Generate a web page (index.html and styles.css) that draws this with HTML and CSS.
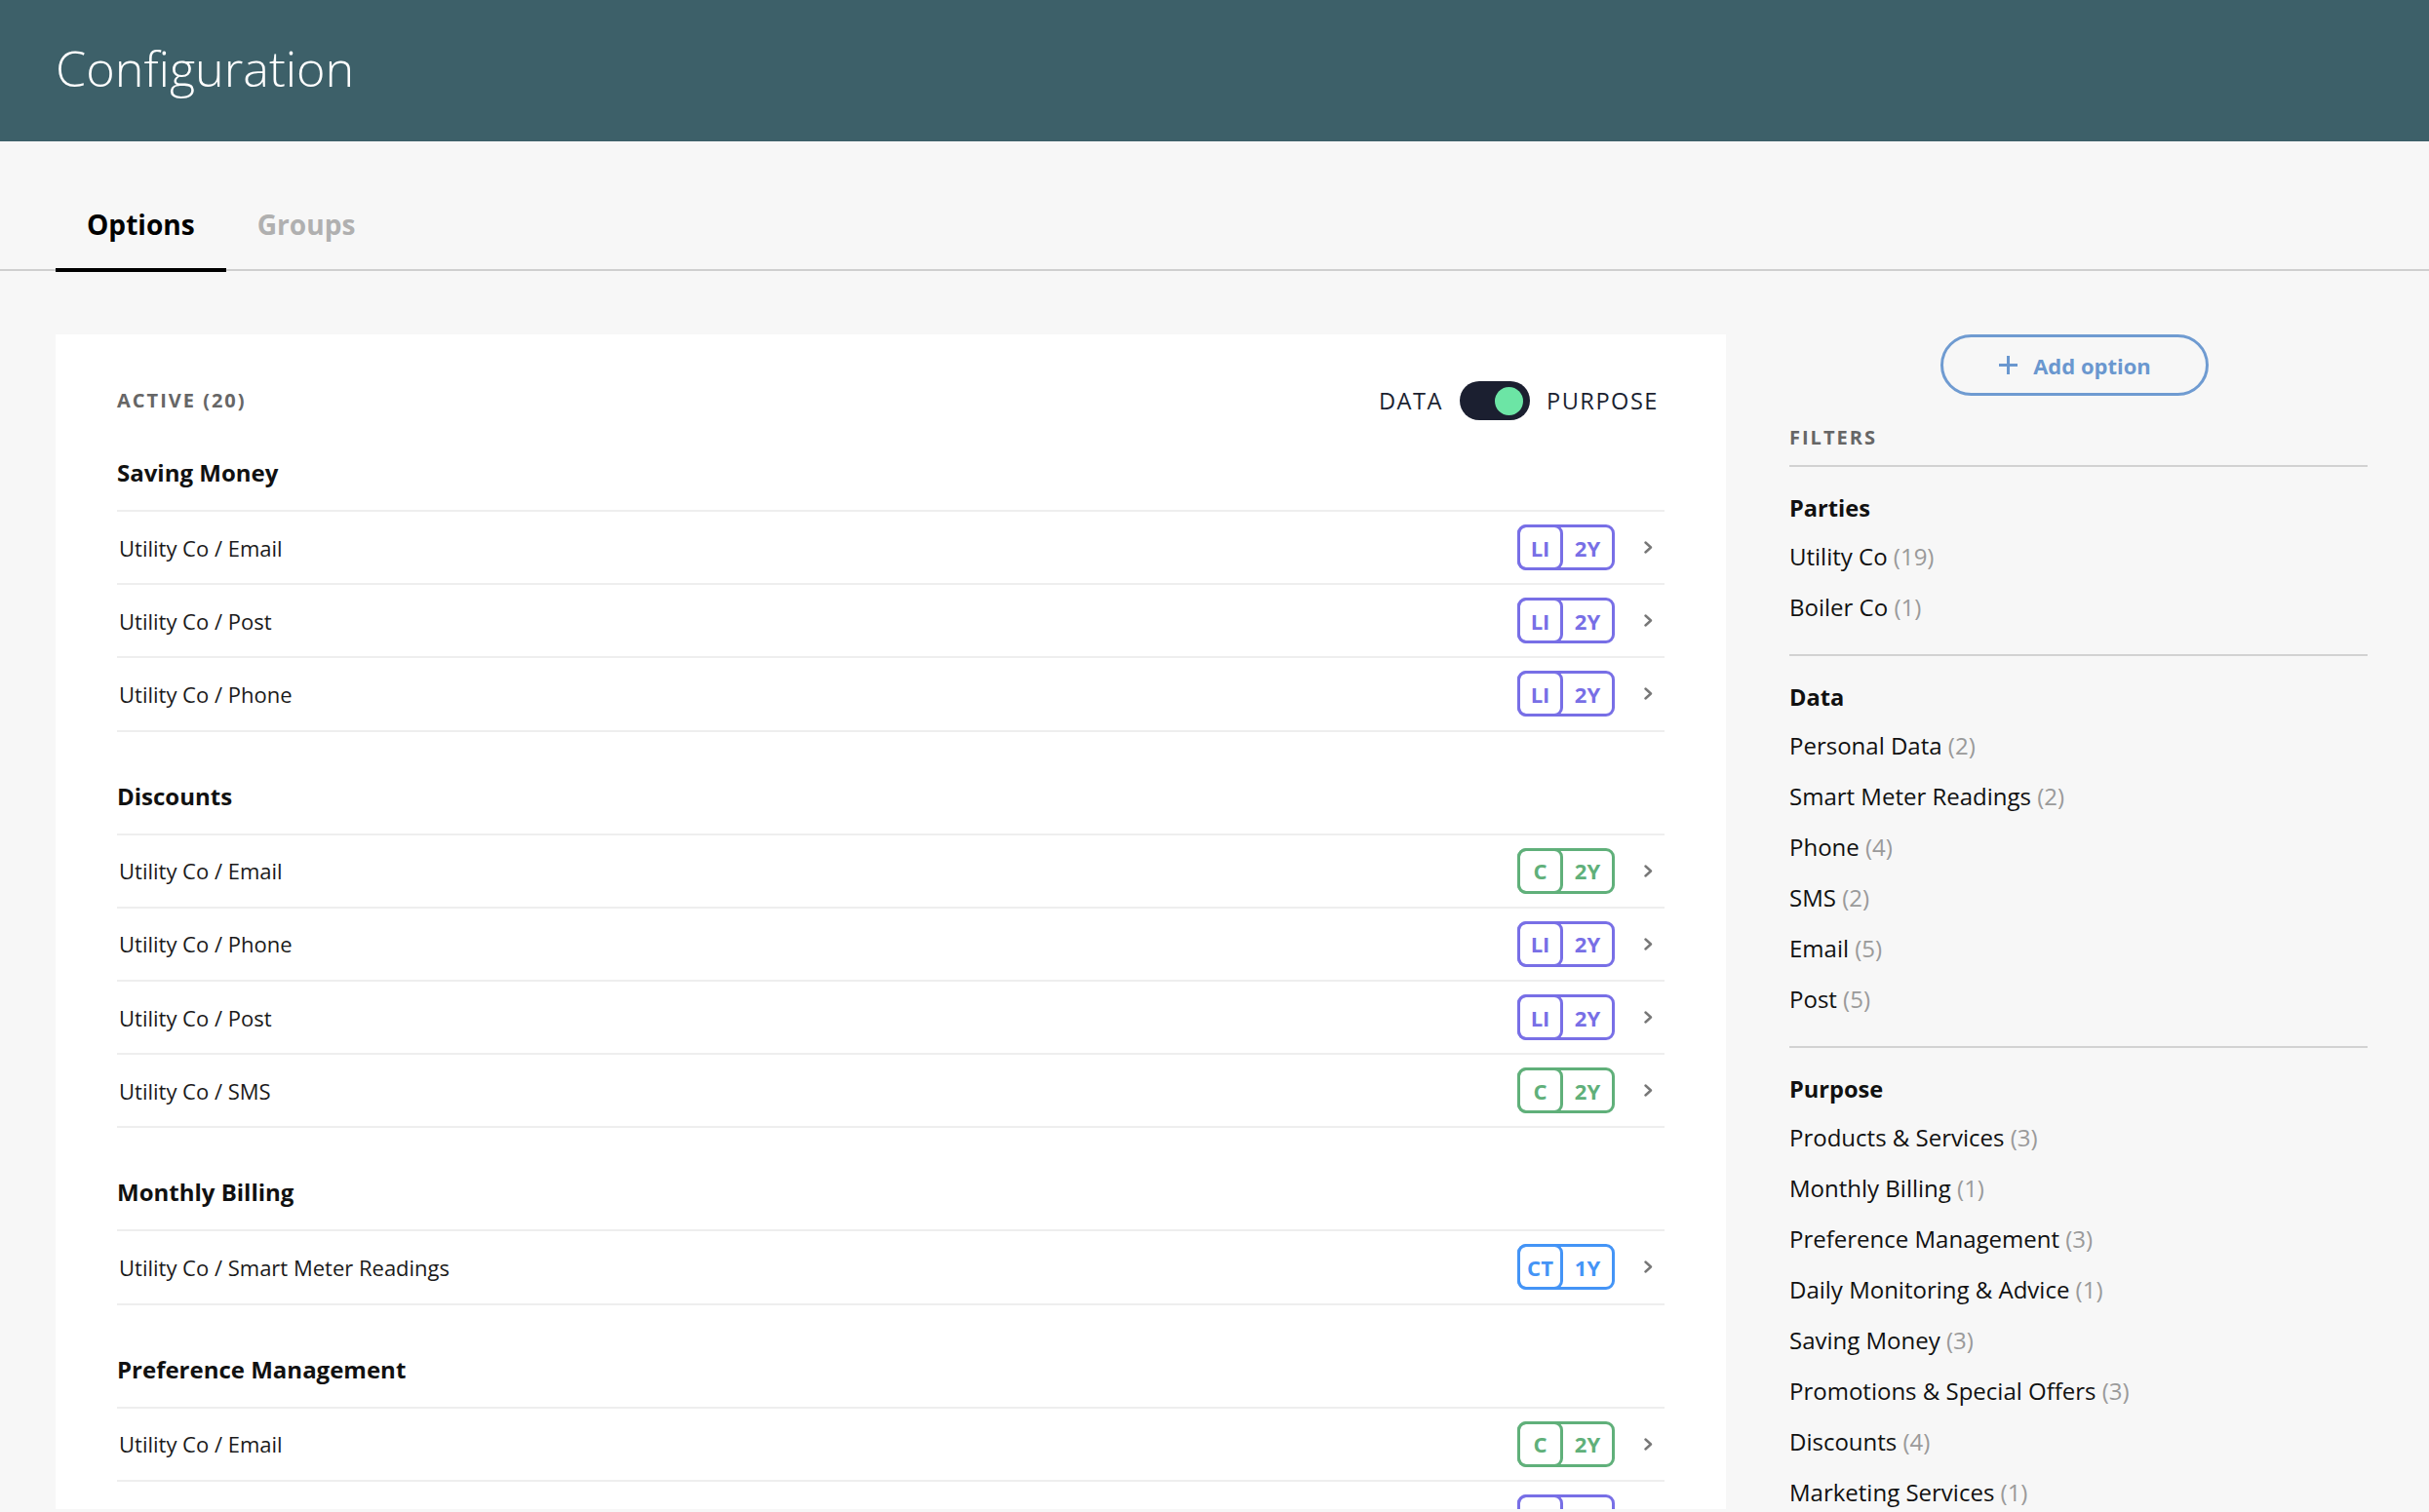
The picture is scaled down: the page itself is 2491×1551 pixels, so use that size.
FILE: index.html
```html
<!DOCTYPE html>
<html lang="en">
<head>
<meta charset="utf-8">
<title>Configuration</title>
<link rel="stylesheet" href="styles.css">
</head>
<body>
<header class="topbar">
  <h1 class="title">Configuration</h1>
</header>
<nav class="tabs">
  <a class="tab tab-active">Options</a>
  <a class="tab">Groups</a>
</nav>
<main class="layout">
  <section class="card">
    <div class="card-head">
      <span class="label">ACTIVE (20)</span>
      <div class="switch-wrap">
        <span class="switch-label">DATA</span>
        <span class="switch"><span class="knob"></span></span>
        <span class="switch-label">PURPOSE</span>
      </div>
    </div>

    <div class="group group-first">
      <h3 class="group-title">Saving Money</h3>
      <div class="row"><span class="row-name">Utility Co / Email</span><span class="badge badge-purple"><span class="badge-k">LI</span><span class="badge-v">2Y</span></span><svg class="chev" viewBox="0 0 9 13"><path d="M1.5 1.5L7 6.5L1.5 11.5"/></svg></div>
      <div class="row"><span class="row-name">Utility Co / Post</span><span class="badge badge-purple"><span class="badge-k">LI</span><span class="badge-v">2Y</span></span><svg class="chev" viewBox="0 0 9 13"><path d="M1.5 1.5L7 6.5L1.5 11.5"/></svg></div>
      <div class="row"><span class="row-name">Utility Co / Phone</span><span class="badge badge-purple"><span class="badge-k">LI</span><span class="badge-v">2Y</span></span><svg class="chev" viewBox="0 0 9 13"><path d="M1.5 1.5L7 6.5L1.5 11.5"/></svg></div>
    </div>

    <div class="group">
      <h3 class="group-title">Discounts</h3>
      <div class="row"><span class="row-name">Utility Co / Email</span><span class="badge badge-green"><span class="badge-k">C</span><span class="badge-v">2Y</span></span><svg class="chev" viewBox="0 0 9 13"><path d="M1.5 1.5L7 6.5L1.5 11.5"/></svg></div>
      <div class="row"><span class="row-name">Utility Co / Phone</span><span class="badge badge-purple"><span class="badge-k">LI</span><span class="badge-v">2Y</span></span><svg class="chev" viewBox="0 0 9 13"><path d="M1.5 1.5L7 6.5L1.5 11.5"/></svg></div>
      <div class="row"><span class="row-name">Utility Co / Post</span><span class="badge badge-purple"><span class="badge-k">LI</span><span class="badge-v">2Y</span></span><svg class="chev" viewBox="0 0 9 13"><path d="M1.5 1.5L7 6.5L1.5 11.5"/></svg></div>
      <div class="row"><span class="row-name">Utility Co / SMS</span><span class="badge badge-green"><span class="badge-k">C</span><span class="badge-v">2Y</span></span><svg class="chev" viewBox="0 0 9 13"><path d="M1.5 1.5L7 6.5L1.5 11.5"/></svg></div>
    </div>

    <div class="group">
      <h3 class="group-title">Monthly Billing</h3>
      <div class="row"><span class="row-name">Utility Co / Smart Meter Readings</span><span class="badge badge-blue"><span class="badge-k">CT</span><span class="badge-v">1Y</span></span><svg class="chev" viewBox="0 0 9 13"><path d="M1.5 1.5L7 6.5L1.5 11.5"/></svg></div>
    </div>

    <div class="group">
      <h3 class="group-title">Preference Management</h3>
      <div class="row"><span class="row-name">Utility Co / Email</span><span class="badge badge-green"><span class="badge-k">C</span><span class="badge-v">2Y</span></span><svg class="chev" viewBox="0 0 9 13"><path d="M1.5 1.5L7 6.5L1.5 11.5"/></svg></div>
      <div class="row"><span class="row-name"></span><span class="badge badge-purple"><span class="badge-k"></span><span class="badge-v"></span></span><svg class="chev" viewBox="0 0 9 13"><path d="M1.5 1.5L7 6.5L1.5 11.5"/></svg></div>
    </div>
  </section>

  <aside class="sidebar">
    <button class="add-btn" type="button"><svg class="plus" viewBox="0 0 21 21"><path d="M10.5 1v19M1 10.5h19"/></svg><span>Add option</span></button>
    <div class="filters-title">FILTERS</div>

    <div class="fgroup">
      <h4 class="fgroup-title">Parties</h4>
      <div class="fitem">Utility Co <span class="count">(19)</span></div>
      <div class="fitem">Boiler Co <span class="count">(1)</span></div>
    </div>

    <div class="fgroup">
      <h4 class="fgroup-title">Data</h4>
      <div class="fitem">Personal Data <span class="count">(2)</span></div>
      <div class="fitem">Smart Meter Readings <span class="count">(2)</span></div>
      <div class="fitem">Phone <span class="count">(4)</span></div>
      <div class="fitem">SMS <span class="count">(2)</span></div>
      <div class="fitem">Email <span class="count">(5)</span></div>
      <div class="fitem">Post <span class="count">(5)</span></div>
    </div>

    <div class="fgroup">
      <h4 class="fgroup-title">Purpose</h4>
      <div class="fitem">Products &amp; Services <span class="count">(3)</span></div>
      <div class="fitem">Monthly Billing <span class="count">(1)</span></div>
      <div class="fitem">Preference Management <span class="count">(3)</span></div>
      <div class="fitem">Daily Monitoring &amp; Advice <span class="count">(1)</span></div>
      <div class="fitem">Saving Money <span class="count">(3)</span></div>
      <div class="fitem">Promotions &amp; Special Offers <span class="count">(3)</span></div>
      <div class="fitem">Discounts <span class="count">(4)</span></div>
      <div class="fitem">Marketing Services <span class="count">(1)</span></div>
    </div>
  </aside>
</main>
</body>
</html>
```
FILE: styles.css
```css
html, body {
  margin: 0;
  height: 100%;
  overflow: hidden;
}
body {
  background: #f7f7f7;
  font-family: "Open Sans", "Liberation Sans", sans-serif;
  color: #1a1a1a;
}

.topbar {
  height: 145px;
  box-sizing: border-box;
  background: #3d6069;
  padding: 35px 57px 0;
}
.title {
  margin: 0;
  font-weight: 300;
  font-size: 50.3px;
  line-height: 70px;
  color: #ffffff;
}

.tabs {
  display: flex;
  padding: 65px 57px 0;
  border-bottom: 2px solid #cfcfcf;
}
.tab {
  display: block;
  padding: 0 32px 25px;
  font-size: 28.1px;
  line-height: 40px;
  font-weight: 700;
  color: #b0b0b0;
  border-bottom: 4px solid transparent;
  margin-bottom: -3px;
}
.tab-active {
  color: #000000;
  border-bottom-color: #000000;
}

.layout {
  display: grid;
  grid-template-columns: 1713px 593px;
  column-gap: 65px;
  padding: 65px 0 0 57px;
  align-items: start;
}

.card {
  background: #ffffff;
  height: 1205px;
  overflow: hidden;
  box-sizing: border-box;
  padding: 48px 63px 0;
}
.card-head {
  display: flex;
  justify-content: space-between;
  align-items: center;
  height: 40px;
}
.label {
  font-weight: 700;
  font-size: 20px;
  line-height: 30px;
  letter-spacing: 2px;
  color: #666666;
}
.switch-wrap {
  display: flex;
  align-items: center;
  gap: 17px;
  margin-right: 6px;
}
.switch-label {
  font-size: 23.6px;
  line-height: 30px;
  letter-spacing: 1.5px;
  color: #1b1f30;
}
.switch {
  display: flex;
  align-items: center;
  justify-content: flex-end;
  width: 72px;
  height: 40px;
  box-sizing: border-box;
  padding-right: 7px;
  border-radius: 20px;
  background: #1b1f30;
}
.knob {
  width: 29px;
  height: 29px;
  border-radius: 50%;
  background: #6ce5a5;
}

.group {
  margin-top: 48px;
}
.group-first {
  margin-top: 36px;
}
.group-title {
  margin: 0;
  font-size: 24px;
  line-height: 36px;
  font-weight: 700;
  color: #111111;
  padding-bottom: 20px;
  border-bottom: 2px solid #eeeeee;
}
.row {
  display: flex;
  align-items: center;
  height: 73.2px;
  padding-left: 2px;
  border-bottom: 2px solid #eeeeee;
}
.row-name {
  flex: 1;
  font-size: 22px;
  color: #1a1a1a;
}

.badge {
  display: inline-flex;
  height: 47px;
  box-sizing: border-box;
  border: 3px solid currentColor;
  border-radius: 9px;
  font-size: 22px;
  font-weight: 700;
}
.badge-k {
  display: flex;
  align-items: center;
  justify-content: center;
  width: 47px;
  box-sizing: border-box;
  margin: -3px 0 -3px -3px;
  border: 3px solid currentColor;
  border-radius: 9px;
}
.badge-v {
  display: flex;
  align-items: center;
  justify-content: center;
  width: 50px;
}
.badge-purple { color: #786fe6; }
.badge-green { color: #60b07a; }
.badge-blue { color: #4494f6; }

.chev {
  width: 9px;
  height: 13px;
  margin-left: 30px;
  margin-right: 12px;
  fill: none;
  stroke: #777777;
  stroke-width: 2.4;
  stroke-linecap: round;
  stroke-linejoin: round;
}

.sidebar {
  display: flex;
  flex-direction: column;
}
.add-btn {
  display: flex;
  align-items: center;
  justify-content: center;
  gap: 15px;
  width: 275px;
  height: 63px;
  box-sizing: border-box;
  margin-left: 155px;
  padding: 0;
  border: 3px solid #6f9bd1;
  border-radius: 32px;
  background: transparent;
  color: #6a97cf;
  font-family: "Open Sans", "Liberation Sans", sans-serif;
  font-weight: 700;
  font-size: 22px;
}
.plus {
  width: 21px;
  height: 21px;
  fill: none;
  stroke: currentColor;
  stroke-width: 3;
}
.filters-title {
  margin-top: 28px;
  font-weight: 700;
  font-size: 20px;
  line-height: 30px;
  letter-spacing: 2px;
  color: #666666;
  padding-bottom: 13px;
  border-bottom: 2px solid #d2d2d2;
}
.fgroup {
  padding: 18px 0 22px;
  border-bottom: 2px solid #d2d2d2;
}
.fgroup-title {
  margin: 0;
  font-size: 23.6px;
  line-height: 48px;
  font-weight: 700;
  color: #111111;
}
.fitem {
  font-size: 24px;
  line-height: 52px;
  color: #111111;
}
.count {
  color: #9a9a9a;
}
```
